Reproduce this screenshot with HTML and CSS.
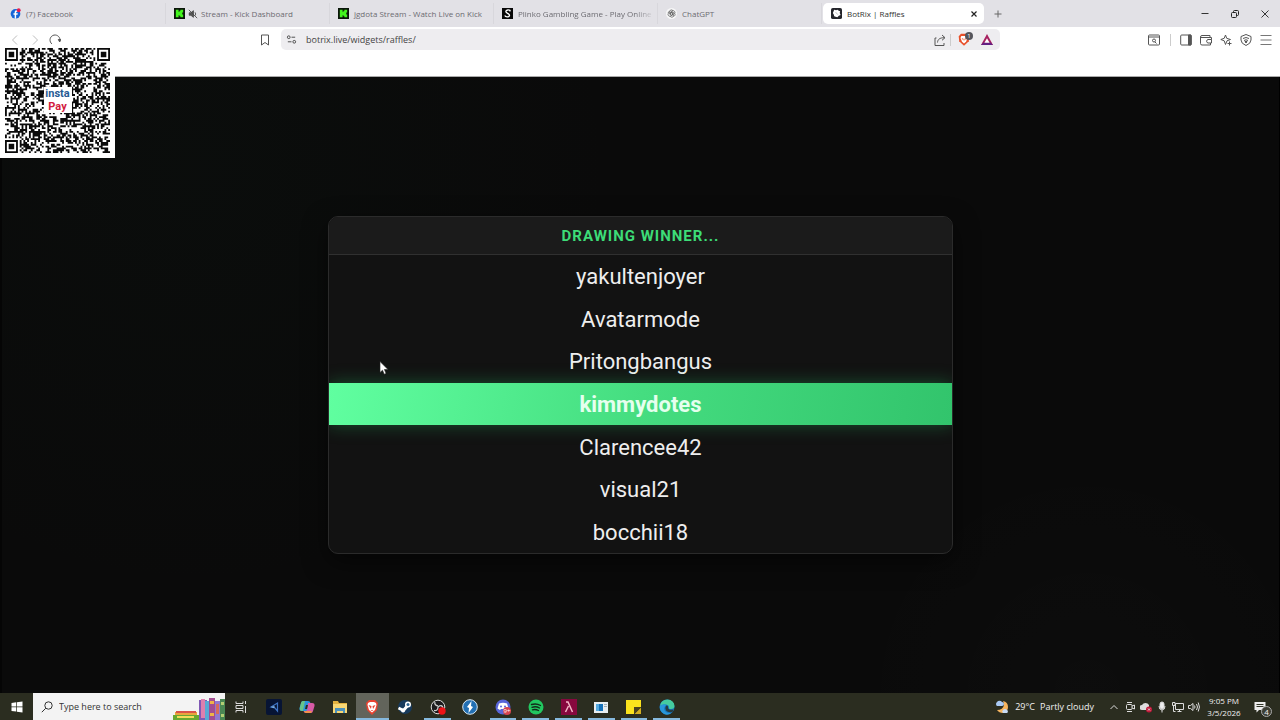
FILE: index.html
```html
<!DOCTYPE html>
<html lang="en">
<head>
  <meta charset="utf-8">
  <title>BotRix | Raffles</title>
  <link rel="stylesheet" href="styles.css">
</head>
<body>
  <div class="tab-strip">
    <div class="tabs">
      <button class="tab">
        <svg class="favicon" viewBox="0 0 12 12"><circle cx="6" cy="6.4" r="5.3" fill="#1565d8"/><path d="M6.7 11.6V7.4h1.5l.3-1.6H6.7v-.9c0-.6.3-.9.9-.9h.9V2.7C7 2.3 5.1 2.500 5.100 4.700v1.100H3.800v1.600h1.300v4.200z" fill="#fff"/><circle cx="9.500" cy="2.500" r="2.100" fill="#e51c50"/></svg>
        <span class="tab-title">(7) Facebook</span>
      </button>
      <button class="tab">
        <svg class="favicon" viewBox="0 0 12 12"><path fill="#0b160a" d="M0 0h12v12H0z"/><path fill="#43f51d" d="M2 2h3v2h1V3h1V2h3v3H9v2h1v3H7V9H6V8H5v2H2z"/></svg>
        <svg class="muted" viewBox="0 0 12 12" fill="none" stroke="#444"><path d="M1.500 4.500h2l3-2.500v8l-3-2.500h-2z" fill="#555"/><path d="M1 1l10 10M8.500 4q1.500 2 0 4"/></svg>
        <span class="tab-title">Stream - Kick Dashboard</span>
      </button>
      <button class="tab">
        <svg class="favicon" viewBox="0 0 12 12"><path fill="#0b160a" d="M0 0h12v12H0z"/><path fill="#43f51d" d="M2 2h3v2h1V3h1V2h3v3H9v2h1v3H7V9H6V8H5v2H2z"/></svg>
        <span class="tab-title">jgdota Stream - Watch Live on Kick</span>
      </button>
      <button class="tab">
        <svg class="favicon" viewBox="0 0 12 12"><path fill="#080808" d="M0 0h12v12H0z"/><path d="M9 3.500C8.500 1.500 4.200 1.700 4.200 3.900c0 2 4 1.700 4 3.900 0 2.300-4.200 2.500-5.200.4M8.500 2L9 3.800" fill="none" stroke="#fff" stroke-width="1.500"/></svg>
        <span class="tab-title fade">Plinko Gambling Game - Play Online</span>
      </button>
      <button class="tab">
        <svg class="favicon" viewBox="0 0 12 12" fill="none" stroke="#555" stroke-width=".8"><circle cx="6" cy="6" r="6" fill="#f7f7f8" stroke="none"/><path d="M4 3.500a2 2 0 0 1 3.500-.6 2 2 0 0 1 2 3 2 2 0 0 1-1.600 3.200A2 2 0 0 1 4.500 9a2 2 0 0 1-2-3A2 2 0 0 1 4 3.500v3.200l2 1.200 2.300-1.300M7.500 2.900L5 4.400v2.800M9.500 5.900L7 4.400 4.500 6M7.900 9.100V6L5.500 4.500M4.500 9L7 7.500V5"/></svg>
        <span class="tab-title">ChatGPT</span>
      </button>
      <div class="tab active">
        <svg class="favicon" viewBox="0 0 12 12"><rect width="12" height="12" rx="2" fill="#24252b"/><path d="M3.500 2l2 .5L7 1.800 8.500 3l1.500.5-.5 2 1 2-2 1-1.500 1.700-2-.7-1.500-.5-.5-2L2 5.500z" fill="#fff"/><path d="M5 4.500l2.500 2.800" stroke="#aaa" stroke-width=".8"/></svg>
        <span class="tab-title">BotRix | Raffles</span>
        <button class="tab-close" aria-label="Close tab"><svg viewBox="0 0 8 8" stroke="#222" stroke-width="1.200"><path d="M1.500 1.500l5 5M6.500 1.500l-5 5"/></svg></button>
      </div>
    </div>
    <button class="new-tab" aria-label="New tab"><svg viewBox="0 0 10 10" stroke="#666" stroke-width="1"><path d="M5 1.500v7M1.500 5h7"/></svg></button>
    <div class="window-controls">
      <button aria-label="Minimize"><svg viewBox="0 0 10 10" stroke="#333"><path d="M1.500 4.500h7"/></svg></button>
      <button aria-label="Restore"><svg viewBox="0 0 10 10" fill="none" stroke="#222"><rect x="1.500" y="3.500" width="5" height="5" rx="1"/><path d="M3.500 3.500v-1q0-1 1-1h3q1 0 1 1v3q0 1-1 1h-1"/></svg></button>
      <button aria-label="Close"><svg viewBox="0 0 10 10" stroke="#222" stroke-width=".9"><path d="M1.500 1.500l7 7M8.500 1.500l-7 7"/></svg></button>
    </div>
  </div>

  <div class="toolbar">
    <div class="toolbar-left">
      <button class="tool faded" aria-label="Back"><svg viewBox="0 0 12 12"><path d="M8 1.500L3.500 6 8 10.500"/></svg></button>
      <button class="tool faded" aria-label="Forward"><svg viewBox="0 0 12 12"><path d="M4 1.500L8.500 6 4 10.500"/></svg></button>
      <button class="tool" aria-label="Reload"><svg viewBox="0 0 12 12"><path d="M3 10A5 5 0 1 1 11 6"/><path d="M9.300 5.500h2.500L10.700 8z" fill="#555"/></svg></button>
      <button class="tool bookmark" aria-label="Bookmark"><svg viewBox="0 0 12 12"><path d="M2.500 1h7v10L6 8.500 2.500 11z"/></svg></button>
    </div>
    <div class="address-bar">
      <svg class="site-icon" viewBox="0 0 12 12" fill="none" stroke="#444"><circle cx="3" cy="3.500" r="1.500"/><path d="M6 3.500h4M2 8.500h4"/><circle cx="9" cy="8.500" r="1.500"/></svg>
      <input class="url" type="text" aria-label="Address" value="botrix.live/widgets/raffles/">
      <button class="tool" aria-label="Share"><svg viewBox="0 0 12 12"><path d="M2.500 4H1v7.500h9V9M3.500 8.500c.2-3 2-4.800 7-4.800M8 1l3 2.700-3 2.600"/></svg></button>
      <span class="divider"></span>
      <button class="shield" aria-label="Brave Shields">
        <svg viewBox="0 0 12 13"><path d="M3 .8h6l2.300 2.400-.5 5L6 12.700 1.200 8.200l-.5-5z" fill="#e8502a"/><path d="M3.300 3h5.400L9.500 5 8 8.800 6 10.500 4 8.800 2.500 5z" fill="#fff"/><path d="M3.500 5l2 .7v2zM8.500 5l-2 .7v2z" fill="#e8502a"/></svg>
        <span class="shield-count">1</span>
      </button>
      <button class="tool rewards" aria-label="Rewards"><svg viewBox="0 0 12 12"><path d="M6 0l6 11H0z" fill="#a72160" stroke="none"/><path d="M0 11h12L9.500 8.500h-7z" fill="#632083" stroke="none"/><path d="M6 4.200l2.600 4.600H3.400z" fill="#fff" stroke="none"/></svg></button>
    </div>
    <div class="toolbar-right">
      <button class="tool" aria-label="Search tabs"><svg viewBox="0 0 12 12"><rect x=".5" y="1" width="11" height="10" rx="1"/><path d="M.5 3h11M7 8l1.500 1.500"/><circle cx="6" cy="6.500" r="1.500"/></svg></button>
      <span class="divider"></span>
      <button class="tool" aria-label="Sidebar"><svg viewBox="0 0 12 12"><rect x=".7" y="1" width="10.600" height="10" rx="1"/><path d="M8.500 1h2.500v10H8.500z" fill="#555"/></svg></button>
      <button class="tool" aria-label="Wallet"><svg viewBox="0 0 12 12"><path d="M10 3.500V1.500H2Q.5 1.500.5 3v6.500q0 1.500 1.500 1.500h8.500v-2M1 3.500h10.500v2M11.500 5.500H8a1.800 1.800 0 0 0 0 3.500h3.500z"/></svg></button>
      <button class="tool" aria-label="Leo AI"><svg viewBox="0 0 12 12"><path d="M5.500 1l1.200 3.300L10.500 5.500 7 6.800 5.500 10.500 4.200 6.800.8 5.500l3.400-1.200zM9.500 7.500v4M7.500 9.500h4"/></svg></button>
      <button class="tool" aria-label="VPN"><svg viewBox="0 0 12 12"><path d="M6 .5l5 2v3.500q0 3.500-5 5.500-5-2-5-5.500V2.500zM3 4.500q3-2 6 0M4 6.500q2-1.500 4 0"/><path d="M5 7.500h2l-1 1.500z" fill="#555"/></svg></button>
      <button class="tool menu" aria-label="Menu"><svg viewBox="0 0 12 12"><path d="M.5 1.500h11M.5 6h11M.5 10.500h11"/></svg></button>
    </div>
  </div>

  <main class="page">
    <section class="raffle">
      <h1 class="raffle-title">Drawing winner...</h1>
      <ul class="names">
        <li>yakultenjoyer</li>
        <li>Avatarmode</li>
        <li>Pritongbangus</li>
        <li class="selected">kimmydotes</li>
        <li>Clarencee42</li>
        <li>visual21</li>
        <li>bocchii18</li>
      </ul>
    </section>
  </main>

  <footer class="taskbar">
    <button class="start" aria-label="Start"><svg viewBox="0 0 12 12" fill="#fff"><path d="M.5 2l4.700-.7v4.300H.5zM5.900 1.200L11.500.4v5.200H5.900zM.5 6.300h4.700v4.300L.5 10zM5.900 6.300h5.600v5.300l-5.600-.8z"/></svg></button>
    <div class="search">
      <svg class="search-icon" viewBox="0 0 12 12" fill="none" stroke="#333"><circle cx="7.500" cy="4.500" r="3.700"/><path d="M4.800 7.200L.8 11.200"/></svg>
      <input type="text" aria-label="Search" placeholder="Type here to search">
      <svg class="books" viewBox="0 0 52 26">
        <path fill="#e9a63e" d="M2 18h22v4H2z"/><path fill="#d9534a" d="M3 17h20v2H3z"/><path fill="#67a832" d="M0 21h26v5H0z"/><path fill="#f4dc59" d="M4 22h17v2H4z"/>
        <path fill="#8059b5" d="M26 6h8v20h-8z"/><path fill="#df7fae" d="M28 5h4v19h-4z"/><path fill="#59a9d5" d="M32 7h4v19h-4z"/>
        <path fill="#a34d91" d="M36 4h6v22h-6z"/><path fill="#efb347" d="M37 7h4v3h-4zM37 19h4v3h-4z"/><path fill="#9278d1" d="M42 7h5v19h-5z"/><path fill="#d76b5c" d="M43 10h3v10h-3z"/><path fill="#4a8754" d="M47 5h5v21h-5z"/><path fill="#b4cf74" d="M48 8h3v3h-3zM48 20h3v3h-3z"/>
      </svg>
    </div>
    <nav class="apps">
      <button aria-label="Task view"><svg viewBox="0 0 16 16" fill="none" stroke="#ddd"><path d="M3 2.500v2h7v-2M3 13.500v-2h7v2M3 6.500h7v3H3zM12.500 2v3M12.500 7v7"/></svg></button>
      <button aria-label="Launcher"><svg viewBox="0 0 16 16"><rect width="16" height="16" rx="2" fill="#071434"/><path d="M11.500 4v8L9 9 5 8z" fill="none" stroke="#3f74c4" stroke-width="1.200"/><path d="M4.500 8l4-1v2z" fill="#8fc4f2"/></svg></button>
      <button aria-label="Copilot"><svg viewBox="0 0 16 16"><path d="M4 2h5q2 0 2.500 2L9 12H3q-3 0-2.500-3L2 4q.5-2 2-2z" fill="#2a93dc"/><path d="M1 8l1-4q.5-2 2-2h2L4 12H3Q0 12 1 8z" fill="#67c489"/><path d="M9 4h4q3 0 2.500 3L14 12q-.5 2-2 2H7q-2 0-2.500-2H7q1 0 1.300-2z" fill="#d85aa6"/><path d="M5 12h8l-1 2H7q-1.500 0-2-2z" fill="#f2914b"/><path d="M7 6h2l-1 4H6z" fill="#292b22"/></svg></button>
      <button aria-label="File Explorer"><svg viewBox="0 0 16 16"><path d="M1 2h5l1 2h8v10H1z" fill="#e3b241"/><path d="M1 5h14v9H1z" fill="#f8d775"/><path d="M3 9h10v5h-2v-2H5v2H3z" fill="#4b91bd"/></svg></button>
      <button class="current open" aria-label="Brave"><svg viewBox="0 0 16 16"><path d="M5 1h6l3 3-1 7-5 5-5-5-1-7z" fill="#e84230"/><path d="M4 4l2-1h4l2 1 .5 2-1.500 5L8 13.500 5 11 3.500 6z" fill="#fff"/><path d="M4.500 6l3 1-.5 3zM11.500 6l-3 1 .5 3zM6.500 11h3L8 12z" fill="#e84230"/></svg></button>
      <button aria-label="Steam"><svg viewBox="0 0 16 16"><circle cx="8" cy="8" r="7" fill="#173a5c"/><path d="M1.500 9l5 2.500 5-6" stroke="#fff" stroke-width="3" fill="none"/><circle cx="11" cy="5.500" r="3" fill="#fff"/><circle cx="11" cy="5.500" r="1.500" fill="#2f6592"/><circle cx="6" cy="11.500" r="2" fill="#fff"/></svg></button>
      <button class="open" aria-label="OBS Studio"><svg viewBox="0 0 16 16"><circle cx="8" cy="8" r="6.800" fill="#1b1b1d" stroke="#ddd"/><g fill="none" stroke="#ccc" stroke-width="1.300"><path d="M8 7q-4-1-3-4M8 8q0 4-4 3.500M8 8q4-3 5 1"/></g><circle cx="12" cy="12" r="3.700" fill="#ed1418"/></svg></button>
      <button aria-label="Lightning"><svg viewBox="0 0 16 16"><circle cx="8" cy="8" r="7.300" fill="#226fb3" stroke="#d8e6f0"/><path d="M9.500 2L5 8l2 1-.5 5L11 8 9 7z" fill="#fff"/></svg></button>
      <button class="open" aria-label="Discord"><svg viewBox="0 0 16 16"><circle cx="8" cy="8" r="7.500" fill="#5865d9"/><path d="M4 4.500q4-1.500 8 0l1.500 5L11 11l-1-1H6l-1 1-2.500-1.500z" fill="#fff"/><circle cx="6" cy="7.500" r="1" fill="#5865d9"/><circle cx="10" cy="7.500" r="1" fill="#5865d9"/><circle cx="12" cy="12" r="4" fill="#d64450"/><text x="12" y="14" text-anchor="middle" class="badge-text">9+</text></svg></button>
      <button class="open" aria-label="Spotify"><svg viewBox="0 0 16 16"><circle cx="8" cy="8" r="7.500" fill="#22c760"/><g fill="none" stroke="#132b1a" stroke-width="1.400" stroke-linecap="round"><path d="M3.500 5.500q5-1.500 9 1M4 8.300q4-1.500 7.500.7M4.500 10.800q3-1 6 .7"/></g></svg></button>
      <button class="open" aria-label="Game client"><svg viewBox="0 0 16 16"><path fill="#86083e" d="M0 0h16v16H0z"/><path d="M5 3h2l4.500 10M7.500 7L4.500 13" fill="none" stroke="#f4b6c7" stroke-width="1.500"/></svg></button>
      <button class="open" aria-label="Window"><svg viewBox="0 0 16 16"><path fill="#e8eef1" d="M1 3h14v11H1z"/><path fill="#1672b9" d="M3 5h7v7H3z"/><path fill="#55aae0" d="M3 5h3v7H3z"/><path fill="#9caeb8" d="M11 5h3v1h-3zM11 7h3v1h-3z"/></svg></button>
      <button class="open" aria-label="Sticky Notes"><svg viewBox="0 0 16 16"><path fill="#fbe21d" d="M0 1h15v14H0z"/><path fill="#4b411e" d="M8 8h7v1l-6 6H8z"/><path fill="#d3ae20" d="M15 9v6H9z"/></svg></button>
      <button class="open" aria-label="Edge"><svg viewBox="0 0 16 16"><circle cx="8" cy="8" r="7.500" fill="#1675be"/><path d="M1 7Q2 .5 8.500.5q6.500.5 7 6.500 0 3-3.500 3-2.500 0-2-1.500 0-2.500-3-3Q3 5 1 7z" fill="#45cba0"/><path d="M1 7q3-3 6-1-3 3-1 6 2 3 7 1.500-4 3.500-8 1.500Q0 12 1 7z" fill="#2997da"/><path d="M7 7q1-1 2 .5-.5 2 1 2.800 2 1 4.500.2l-1 2.500Q9 14 7 11.500 5.500 9 7 7z" fill="#263b42"/></svg></button>
    </nav>
    <div class="tray">
      <button class="weather">
        <svg viewBox="0 0 16 16"><path d="M9 2q5 1 5 6t-5 6q-4 0-6-3 6 0 7-5 0-2-1-4z" fill="#f6b45f"/><path d="M3 7a2.500 2.500 0 0 1 0-4 3 3 0 0 1 5 0 2 2 0 0 1 0 4z" fill="#a9c9f4"/><path d="M9 14a2 2 0 0 1 0-3 2.500 2.500 0 0 1 4 0 1.700 1.700 0 0 1 0 3z" fill="#c8dbf5"/></svg>
        <span>29°C</span>
        <span>Partly cloudy</span>
      </button>
      <div class="tray-icons">
        <button aria-label="Show hidden icons"><svg viewBox="0 0 12 12"><path d="M2.500 8L6 4.500 9.500 8"/></svg></button>
        <button aria-label="Meet now"><svg viewBox="0 0 12 12"><rect x="2.500" y="3.500" width="5.500" height="5" rx="1"/><path d="M8 5l2.500-1v4L8 7M3 1.500h5M3 10.500h5"/></svg></button>
        <button aria-label="OneDrive"><svg viewBox="0 0 12 12"><path d="M2 9a2.500 2.500 0 0 1 0-5 4 4 0 0 1 7 0v5z" fill="#ddd" stroke="none"/><circle cx="9" cy="8.500" r="3" fill="#c4183a" stroke="none"/><path d="M8 7.500l2 2M10 7.500l-2 2"/></svg></button>
        <button aria-label="Microphone"><svg viewBox="0 0 12 12"><rect x="4" y="1" width="4" height="7" rx="2" fill="#eee"/><path d="M3 5q0 4 3 4t3-4M6 9v2.500"/></svg></button>
        <button aria-label="Network"><svg viewBox="0 0 12 12"><path d="M3.500 2.500h8v6h-8zM5.500 10.500h4M7.500 8.500v2M.5 1.500h2.500v3H.5zM1.500 4.500v6h2"/></svg></button>
        <button aria-label="Volume"><svg viewBox="0 0 12 12"><path d="M.5 4.500h2l2.500-2v7l-2.500-2h-2zM6.500 4.500q1 1.500 0 3M8.500 3q2 3 0 6M10.200 1.500q2.500 4.500 0 9"/></svg></button>
      </div>
      <div class="clock"><span>9:05 PM</span><span>3/5/2026</span></div>
      <button class="notifications" aria-label="Notifications">
        <svg viewBox="0 0 12 12"><path d="M.5 1h11v8H5L2.500 11.500V9h-2z" fill="#eee"/><path d="M2.500 3.500h7M2.500 5.500h7" stroke="#333629"/></svg>
        <span class="count">4</span>
      </button>
    </div>
  </footer>

  <div class="qr">
    <svg id="qr-code" viewBox="0 0 57 57" role="img" aria-label="InstaPay QR code"></svg>
    <div class="qr-logo"><span class="insta">insta</span><span class="pay">Pay</span></div>
  </div>
  <svg class="cursor" viewBox="0 0 10 14"><path d="M1 .5v11l2.500-2.300 1.700 4 1.900-.8-1.700-3.900H9z" fill="#fff" stroke="#222" stroke-width=".6"/></svg>
  <script src="qr.js"></script>
</body>
</html>
```
FILE: styles.css
```css
* {
  box-sizing: border-box;
}

body {
  display: flex;
  flex-direction: column;
  min-height: 100vh;
  margin: 0;
  font-family: "Open Sans", "Noto Sans", sans-serif;
  font-size: 9px;
  color: #333;
  background: #0a0a0a;
}

button {
  display: flex;
  align-items: center;
  justify-content: center;
  padding: 0;
  border: 0;
  background: none;
  color: inherit;
  font: inherit;
}

svg {
  display: block;
  flex-shrink: 0;
}

input {
  min-width: 0;
  padding: 0;
  border: 0;
  outline: 0;
  background: none;
  font: inherit;
}

/* Tabs */
.tab-strip {
  display: flex;
  align-items: center;
  height: 27px;
  padding-left: 2px;
  background: #e2e1e6;
}

.tabs {
  display: flex;
  width: 984px;
}

.tab {
  display: flex;
  flex: 0 0 164px;
  align-items: center;
  justify-content: flex-start;
  height: 21px;
  padding: 0 2px 0 8px;
  gap: 5px;
  border-right: 1px solid #d8d7dc;
  color: #6c6b71;
  font-size: 8px;
  white-space: nowrap;
}

.tab.active {
  flex: 1;
  margin: 0 2px 0 1px;
  padding-right: 6px;
  border: 0;
  border-radius: 5px;
  background: #fff;
  color: #333;
}

.favicon {
  width: 11px;
  height: 11px;
}

.muted {
  width: 10px;
  height: 10px;
  margin: 0 -2px;
}

.tab-title {
  flex: 1;
  text-align: left;
}

.tab-title.fade {
  mask-image: linear-gradient(to right, #000 85%, transparent);
}

.tab-close svg {
  width: 8px;
  height: 8px;
}

.new-tab {
  width: 24px;
}

.new-tab svg,
.window-controls svg {
  width: 10px;
  height: 10px;
}

.window-controls {
  display: flex;
  margin-left: auto;
}

.window-controls button {
  width: 30px;
  height: 27px;
}

/* Toolbar */
.toolbar {
  display: grid;
  grid-template-columns: 281px 1fr 280px;
  align-items: start;
  height: 50px;
  padding-top: 2px;
  border-bottom: 1px solid #aaa;
  background: #fff;
}

.toolbar-left,
.toolbar-right,
.address-bar {
  display: flex;
  align-items: center;
  height: 21px;
}

.toolbar-left {
  padding: 0 6px 0 5px;
}

.toolbar-right {
  justify-content: flex-end;
  padding-right: 4px;
}

.tool {
  width: 20px;
  height: 20px;
}

.tool svg {
  width: 12px;
  height: 12px;
  fill: none;
  stroke: #555;
  stroke-width: 1;
}

.faded {
  opacity: 0.4;
}

.bookmark {
  margin-left: auto;
}

.menu svg {
  stroke: #777;
}

.divider {
  width: 1px;
  height: 12px;
  background: #ccc;
}

.toolbar-right .divider {
  margin: 0 5px 0 6px;
}

.address-bar {
  padding: 0 3px 0 5px;
  border-radius: 5px;
  background: #eeedf0;
}

.site-icon {
  width: 11px;
  height: 11px;
}

.url {
  flex: 1;
  margin-left: 9px;
  color: #444;
}

.shield {
  position: relative;
  width: 26px;
  height: 20px;
}

.shield svg {
  width: 12px;
  height: 13px;
}

.shield-count {
  position: absolute;
  top: 2px;
  right: 4px;
  width: 8px;
  height: 8px;
  border-radius: 50%;
  background: #54555b;
  color: #fff;
  font-size: 6px;
  line-height: 8px;
}

/* Raffle */
.page {
  display: flex;
  flex: 1;
  align-items: center;
  justify-content: center;
  border-right: 1px solid #000;
  border-left: 2px solid #050505;
  background:
    radial-gradient(circle at 15% 15%, rgba(20, 70, 45, 0.05), transparent 35%),
    radial-gradient(circle at 85% 100%, rgba(255, 255, 255, 0.01), transparent 20%),
    #0a0a0a;
}

.raffle {
  width: 49%;
  overflow: hidden;
  border: 1px solid #2b2b2b;
  border-radius: 10px;
  background: #121212;
  box-shadow: 0 8px 24px rgba(0, 0, 0, 0.5);
  font-family: Roboto, sans-serif;
}

.raffle-title {
  margin: 0;
  padding-top: 1px;
  border-bottom: 1px solid #303030;
  background: #1b1b1b;
  color: #3ddc77;
  font-size: 15px;
  font-weight: 700;
  line-height: 36px;
  letter-spacing: 1px;
  text-align: center;
  text-transform: uppercase;
}

.names {
  display: grid;
  grid-auto-rows: 1fr;
  height: 298px;
  margin: 0;
  padding: 0;
  list-style: none;
}

.names li {
  display: flex;
  align-items: center;
  justify-content: center;
  padding-top: 1px;
  color: #eee;
  font-size: 22px;
}

.names .selected {
  background: linear-gradient(100deg, #60ffa0, #45dd80 50%, #32c46c);
  box-shadow: 0 0 18px rgba(40, 200, 105, 0.35);
  color: #e5ffee;
  font-weight: 700;
}

/* Taskbar */
.taskbar {
  display: flex;
  height: 27px;
  background: #2b2d20;
  color: #f0f0f0;
}

.start {
  width: 33px;
}

.start svg {
  width: 12px;
  height: 12px;
}

.search {
  display: flex;
  align-items: center;
  width: 192px;
  padding-left: 8px;
  background: #f3f3f3;
}

.search-icon {
  width: 12px;
  height: 12px;
}

.search input {
  flex: 1;
  margin-left: 6px;
}

.search input::placeholder {
  color: #333;
}

.books {
  width: 52px;
  height: 26px;
}

.apps {
  display: flex;
  width: 458px;
}

.apps button {
  flex: 1;
  position: relative;
}

.apps svg {
  width: 16px;
  height: 16px;
}

.apps .current {
  background: #62645b;
}

.apps .open::after {
  content: "";
  position: absolute;
  right: 3px;
  bottom: 0;
  left: 3px;
  height: 2px;
  background: #86b9de;
}

.apps .current::after {
  right: 0;
  left: 0;
}

.badge-text {
  fill: #fff;
  font-size: 6px;
}

.tray {
  display: flex;
  align-items: center;
  margin-left: auto;
  padding-right: 6px;
}

.weather {
  gap: 5px;
  margin-right: 12px;
}

.weather svg {
  width: 16px;
  height: 16px;
}

.tray-icons {
  display: flex;
}

.tray-icons button {
  width: 16px;
  height: 27px;
}

.tray-icons svg {
  width: 12px;
  height: 12px;
  fill: none;
  stroke: #ddd;
  stroke-width: 1;
}

.clock {
  display: flex;
  flex-direction: column;
  width: 44px;
  text-align: center;
  font-size: 8px;
  line-height: 12px;
}

.notifications {
  position: relative;
  width: 28px;
  height: 27px;
}

.notifications svg {
  width: 12px;
  height: 12px;
}

.count {
  position: absolute;
  right: 2px;
  bottom: 3px;
  width: 11px;
  height: 11px;
  border: 1px solid #aaa;
  border-radius: 50%;
  background: #3c3e34;
  font-size: 8px;
  line-height: 9px;
}

/* Stream overlay */
.qr {
  position: absolute;
  top: 47px;
  left: 0;
  display: flex;
  justify-content: center;
  width: 115px;
  height: 111px;
  padding-top: 1px;
  background: #fff;
}

.qr > svg {
  width: 105px;
  height: 105px;
}

.qr-logo {
  position: absolute;
  top: 40px;
  display: flex;
  flex-direction: column;
  align-items: center;
  width: 28px;
  background: #fff;
  font-family: Roboto, sans-serif;
  font-size: 11px;
  font-weight: 700;
  line-height: 13px;
}

.insta {
  color: #275b94;
}

.pay {
  color: #d3203e;
}

.cursor {
  position: absolute;
  top: 361px;
  left: 379px;
  width: 10px;
  height: 14px;
}
```
FILE: qr.js
```js
const size = 57;
const qr = document.getElementById('qr-code');
let seed = 2026;
let path = '';

function nextBit() {
  seed = (seed * 1103515245 + 12345) % 2147483648;
  return seed / 2147483648 > 0.48;
}

// finder squares sit in three corners
function inFinder(x, y) {
  return (x < 8 && y < 8) || (x > size - 9 && y < 8) || (x < 8 && y > size - 9);
}

for (let y = 0; y < size; y++) {
  for (let x = 0; x < size; x++) {
    if (nextBit() && !inFinder(x, y)) {
      path += `M${x} ${y}h1v1h-1z`;
    }
  }
}

[[0, 0], [size - 7, 0], [0, size - 7]].forEach(([x, y]) => {
  path += `M${x} ${y}h7v7h-7zM${x + 1} ${y + 1}v5h5v-5zM${x + 2} ${y + 2}h3v3h-3z`;
});

qr.innerHTML = `<path d="${path}" fill="#0b0b0b"/>`;
```
